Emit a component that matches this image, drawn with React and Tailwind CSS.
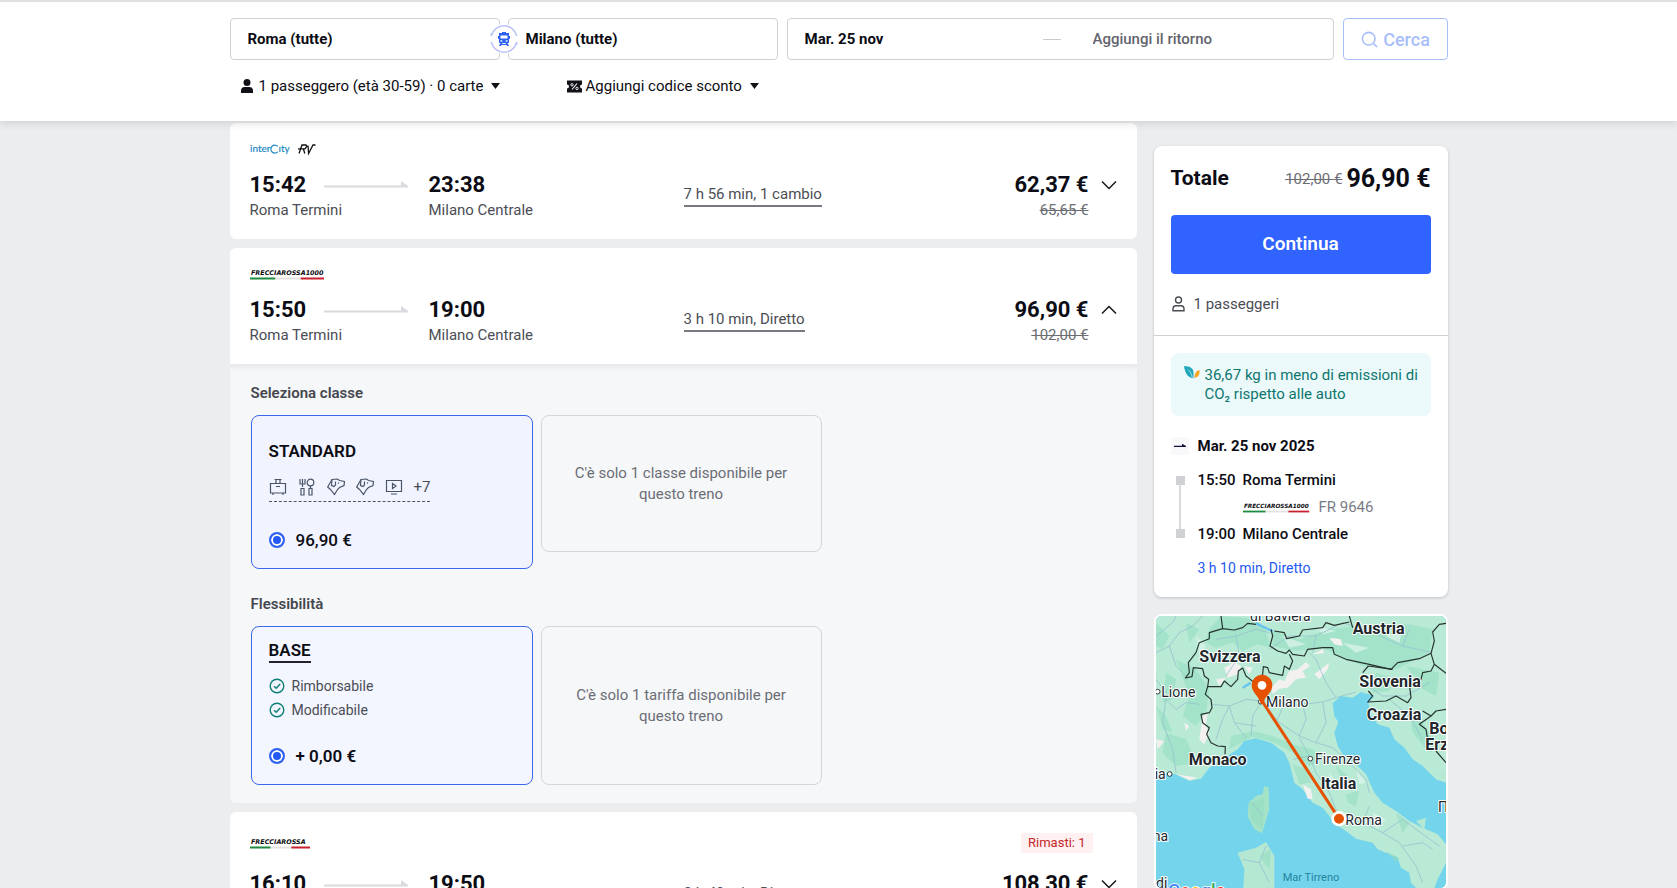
import { useState } from "react";
import { Search } from "lucide-react";

function Frecciarossa({ thousand, className }) {
  const w = thousand ? 76 : 62;
  return (
    <svg viewBox={`0 0 ${w} 12`} className={className} role="img" aria-label="Frecciarossa">
      <text
        x="1"
        y="7"
        fontSize="6.4"
        fontFamily="DejaVu Sans"
        fontWeight="700"
        fontStyle="italic"
        fill="#0c0c10"
      >
        {thousand ? "FRECCIAROSSA1000" : "FRECCIAROSSA"}
      </text>
      <rect x="0" y="9.500" width={w / 3} height="2" fill="#1c8a3f" />
      <rect x={w / 3} y="9.500" width={w / 3} height="2" fill="#e3e3e3" />
      <rect x={(w / 3) * 2} y="9.500" width={w / 3 - 2} height="2" fill="#c8202f" />
    </svg>
  );
}

function InterCity() {
  return (
    <svg viewBox="0 0 66 14" className="w-[66px] h-[14px]" role="img" aria-label="InterCity RV">
      <g fontFamily="Lato" fontSize="10" fill="#2388c4" stroke="#2388c4" strokeWidth=".2">
        <text x="0" y="10">inter</text>
        <text x="28.500" y="10">ıty</text>
      </g>
      <path d="M27.800 4.400a4 4 0 1 0 0 5.400" fill="none" stroke="#2388c4" strokeWidth="1.200" />
      <path
        d="M49 11.500L52 3h4l.8 1.500L55 6.800h-7M53.300 6.800L54.800 11.500M58 3.500L58.600 11.500 63 3h2.500"
        fill="none"
        stroke="#111"
        strokeWidth="1.300"
      />
    </svg>
  );
}

function Train({ className }) {
  return (
    <svg viewBox="0 0 12 14" className={className}>
      <path d="M4 0h4v1h3v10H1V1h3zM0 4h12v3H0zM2.500 11h2L3 14H1zM7.500 11h2L11 14H9zM2 12h8v1H2z" fill="currentColor" />
      <path d="M2.500 3.500h7v3h-7zM2.500 8.300h1.700v1.500H2.500zM7.800 8.300h1.700v1.500H7.800z" fill="#fff" />
    </svg>
  );
}

function Voucher() {
  return (
    <svg viewBox="0 0 15 13" className="w-[15px] h-[13px]">
      <path d="M0 .5h15v4a2 2 0 0 0 0 4v4H0v-4a2 2 0 0 0 0-4z" fill="#111118" />
      <path d="M5 9.500L10 3.500" stroke="#fff" strokeWidth="1.100" />
      <circle cx="5" cy="4.800" r="1.200" fill="none" stroke="#fff" strokeWidth=".9" />
      <circle cx="10" cy="8.400" r="1.200" fill="none" stroke="#fff" strokeWidth=".9" />
    </svg>
  );
}

function Leaf() {
  return (
    <svg viewBox="0 0 16 14" className="w-4 h-[14px] shrink-0">
      <path d="M0 0c6 .3 9.500 2 9.500 7v5.500C3.500 11.500 1 7 0 0z" fill="#1fa6b8" />
      <path d="M4 3.500c2.500 2 4 5 4.500 9.500" fill="none" stroke="#fff" strokeWidth=".6" />
      <path d="M15.500 4c.3 4.500-1 7-5 8 0-4 1-7 5-8z" fill="#f5a623" />
    </svg>
  );
}

const line = { fill: "none", stroke: "#4b5568", strokeWidth: 1.2 };

const Bag = () => (
  <svg viewBox="0 0 18 18" className="size-[18px]" {...line}>
    <path d="M1.500 5.500h15v9.500h-15zM4 15v2M14 15v2M7 5.500V2M11 5.500V2M5.500 1.500h7M7 8.500h4" />
  </svg>
);
const Cutlery = () => (
  <svg viewBox="0 0 18 18" className="size-[18px]" {...line}>
    <path d="M2 1v5h5V1M4.500 1v8M3 10.500h3V17H3zM11 10.500h3V17h-3zM12.500 8v2" />
    <circle cx="12.500" cy="4.500" r="3.300" />
  </svg>
);
const Dog = () => (
  <svg viewBox="0 0 18 18" className="size-[18px]" {...line}>
    <path d="M5 1.500L10.500 1 12.500 2.500 17.500 3.500 17 7.500 12.500 9.500 10.500 11.500 7.500 16.500 3.500 11.500 .7 9z" />
    <path d="M5 1.500L4.500 7.500 7 8.500 8.500 7V3.500M11.500 4.500v1.200" />
  </svg>
);
const Screen = () => (
  <svg viewBox="0 0 18 18" className="size-[18px]" {...line}>
    <path d="M1.500 2.500h15v11h-15zM7.500 5.500L11 8l-3.500 2.500zM6 16h6" />
  </svg>
);

function CheckMark() {
  return (
    <svg viewBox="0 0 16 16" className="size-4" fill="none" stroke="#0f8174" strokeWidth="1.4">
      <circle cx="8" cy="8" r="6.800" />
      <path d="M5 8.300L7.200 10.300 11.200 6" />
    </svg>
  );
}

function Arrow() {
  return (
    <svg viewBox="0 0 84 8" className="w-[84px] h-2">
      <path d="M0 4.500h77V0l7 5v1.500H0z" fill="#d9dadd" />
    </svg>
  );
}

function Radio(props) {
  return (
    <input
      type="radio"
      className="appearance-none size-4 rounded-full border-2 border-[#2f62f2] bg-white checked:bg-[#2359f0] shadow-[inset_0_0_0_2px_white]"
      {...props}
    />
  );
}

function Trip({ logo, from, to, dep, arr, duration, price, oldPrice, open, badge, onToggle }) {
  return (
    <div className="bg-white px-5 pt-[18px] pb-[18px]">
      <div className={badge ? "h-[26px] flex items-center justify-between" : "h-4 flex items-center"}>
        {logo}
        {badge && (
          <span className="mr-6 px-[7px] h-5 leading-5 bg-[#fff1f1] text-[13px] text-[#c62828]">
            {badge}
          </span>
        )}
      </div>
      <div className="mt-[13px] flex">
        <div className="w-[179px]">
          <div className="flex items-center">
            <span className="w-[74px] text-[22px] leading-[30px] font-bold">{dep}</span>
            <Arrow />
          </div>
          <div className="text-[15px] leading-[21px] text-[#4b4d55]">{from}</div>
        </div>
        <div className="w-[255px]">
          <div className="text-[22px] leading-[30px] font-bold">{arr}</div>
          <div className="text-[15px] leading-[21px] text-[#4b4d55]">{to}</div>
        </div>
        <div className="pt-3">
          <a
            href="#dettagli"
            className="inline-block border-b-2 border-[#777980] text-[15px] leading-[22px] text-[#4b4d55]"
          >
            {duration}
          </a>
        </div>
        <div className="ml-auto text-right">
          <div className="text-[22px] leading-[30px] font-bold">{price}</div>
          <div className="text-[15px] leading-[21px] text-[#6b6d75] line-through">{oldPrice}</div>
        </div>
        <button className="ml-3 h-[30px]" aria-label="Dettagli" onClick={onToggle}>
          <svg viewBox="0 0 16 10" className="w-4 h-[10px]" fill="none" stroke="#17171d" strokeWidth="1.5">
            <path d={open ? "M1 8.500L8 1.500 15 8.500" : "M1 1.500L8 8.500 15 1.500"} />
          </svg>
        </button>
      </div>
    </div>
  );
}

function Unavailable({ className, children }) {
  return (
    <div
      className={`w-[281px] rounded-lg border border-[#d5d6d9] flex items-center justify-center text-center text-[15px] leading-[21px] text-[#6b6d75] ${className}`}
    >
      <p className="w-[220px]">{children}</p>
    </div>
  );
}

function RouteMap() {
  return (
    <svg
      viewBox="0 0 870 816"
      preserveAspectRatio="xMidYMin slice"
      className="w-full h-[272px] rounded-md bg-[#72d4ec]"
      role="img"
      aria-label="Mappa Roma Milano"
    >
      <rect width="870" height="816" fill="#73d4ec" />
      {/* mainland */}
      <path
        d="M0 0H870V500L840 490 800 450 770 430 745 395 715 370 700 335 665 325 645 295 637 262 655 240 615 228 590 245 555 240 530 262 535 300 547 318 535 350 545 390 560 415 600 445 630 475 655 530 680 560 720 585 760 615 800 635 845 655 870 685V740L845 790 835 816H780L765 800 760 770 735 755 725 725 690 710 665 700 650 680 600 668 570 645 540 625 500 575 470 560 440 520 415 500 400 440 385 410 345 380 300 367 265 375 245 400 205 425 160 455 135 488 100 495 60 475 0 470z"
        fill="#b9ead6"
      />
      {/* islands */}
      <path d="M325 510L338 515 340 580 318 652 295 640 275 600 278 560 300 540 320 535z" fill="#a4e3c7" />
      <path d="M245 710L300 695 330 678 355 720 355 816H262L265 760z" fill="#b4e8d3" />
      <path d="M870 470L840 476 860 490zM780 615L810 605 805 640z" fill="#b4e8d3" />
      {/* woods */}
      <g fill="#93dcc0" opacity=".55">
        <path d="M195 0L300 10 330 45 345 95 305 85 260 105 230 80 180 95 150 80 160 40z" />
        <path d="M350 45L430 70 520 40 600 30 760 25 830 40 820 110 720 160 620 150 540 115 500 95 420 105 350 90z" />
        <path d="M60 130L120 160 160 220 150 290 120 330 80 300 100 240zM30 350L90 370 120 440 60 450 20 410z" />
        <path d="M225 360L290 345 350 360 410 385 470 400 500 430 460 450 410 410 350 378 290 362 220 400z" />
        <path d="M410 445L450 460 465 500 430 505zM540 450L575 480 560 500zM570 535L610 525 600 570 575 560zM660 170L720 190 700 225 650 230zM750 150L850 170 840 240 800 220z" />
        <path d="M760 290L800 320 850 400 820 410 770 350zM720 590L760 620 740 650zM280 560L325 545 320 640 285 610zM310 720L345 700 340 760z" />
        <path d="M0 20L40 60 20 100 0 90zM90 20L130 40 100 80zM30 170L60 190 50 250 20 260zM690 705L730 725 720 740z" />
        <path d="M600 60L680 45 750 60 780 100 700 130 640 100zM370 70L430 85 470 75 440 100 380 95zM200 45L260 30 320 60 280 80zM550 480L600 500 590 520zM0 270L30 300 50 350 20 340z" />
      </g>
      <g fill="#def5ec" opacity=".7">
        <path d="M380 60L450 85 400 95zM560 80L640 95 600 110zM690 60L740 40 730 80zM520 470L545 500 530 520zM600 460L630 500 610 505zM650 590L690 610 660 640zM480 30L540 45 500 55zM120 60L150 90 130 110z" />
      </g>
      {/* snow */}
      <g fill="#f2f1f0">
        <path d="M345 215L370 190 385 195 400 165 425 160 450 138 462 150 440 165 450 185 420 190 395 215 370 218 350 235z" />
        <path d="M475 175L500 155 520 140 515 160 490 190zM520 65L555 70 560 90 535 85zM470 115L500 100 505 112z" />
        <path d="M205 155L235 138 255 150 245 175 215 185zM265 150L290 155 280 175zM180 190L210 185 190 210z" />
        <path d="M140 300L155 290 150 330 160 350 145 385 130 370zM85 320L100 330 90 345zM0 370L25 375 5 400z" />
        <path d="M440 505L465 520 470 550 455 548zM60 475L125 485 100 492z" />
      </g>
      {/* roads */}
      <g fill="none" stroke="#98c3cf" strokeWidth="2.5">
        <path d="M0 110L40 90 70 50 110 30 140 0M40 90L60 150 90 180M0 60L50 20 60 0M30 250L60 280 90 260 130 265M30 250L20 320 50 400 60 470M0 190L30 230" />
        <path d="M170 265L220 270 270 250 318 255 380 275 440 265 500 258 540 245 600 228M220 270L235 320 270 365M318 255L290 300 285 360M318 260L370 320 430 360 480 380 530 395M440 265L450 310 430 360M380 275L360 320M235 320L300 330M500 258L510 320 480 380M220 270L200 310 180 370M540 245L510 200 480 130 460 110" />
        <path d="M430 365L460 420 480 470 520 530 548 600M460 420L410 430M530 395L580 440 630 490 640 530M548 600L620 620 680 650 730 680 780 750 800 800M620 620L640 570M680 650L740 610 780 640 850 690M740 690L800 680 830 700" />
        <path d="M340 100L400 60 480 60 560 20M480 60L470 110M560 20L650 50 740 90 830 110M740 90L760 40M620 200L680 240 750 240 820 200M700 250L760 300 800 370M180 70L240 60 300 40 340 50M240 60L250 120 210 180" />
        <path d="M290 560L320 600M260 730L310 740 340 800M310 740L330 690" />
      </g>
      <path d="M300 22L350 46M260 215L285 200" stroke="#66c4ee" strokeWidth="7" fill="none" />
      {/* borders */}
      <g fill="none" stroke="#26332f" strokeWidth="3.5" strokeLinejoin="round">
        <path d="M195 0L200 38 235 42 260 35 275 22 300 25M200 38L160 50 160 68 130 80 120 110 97 140 100 170 88 186 108 182 112 155 140 158 145 180 158 190 155 212 195 212 205 195 225 212 245 190 247 165 260 156 270 180 295 200 320 175 322 152 335 155 340 170 380 178 385 150 400 160 410 135 400 115" />
        <path d="M345 40L350 60 342 90 365 105 390 112 400 102 410 115 445 120 455 100 500 95 530 95 535 115 570 130 640 145 705 160 725 140 790 128 825 112 835 75 830 48 850 25 870 22" />
        <path d="M355 45L385 50 392 68 430 60 440 42 500 35 510 20 535 28 580 18M580 0L590 35M637 150L620 170M637 150L710 160M825 112L835 145 870 172M835 145L825 165 800 170 795 190 760 205 765 245 755 260 720 240 690 255 635 258 650 240 637 225" />
        <path d="M155 212L148 235 165 250 168 275 160 290 135 295 140 320 160 335 152 355 165 380 185 390 208 392 207 415M800 285L825 300 840 285 870 280M825 300L790 325 810 340 815 370M840 405L870 440" />
      </g>
      {/* country and city names */}
      <g
        fontFamily="Roboto, sans-serif"
        fill="#20262b"
        stroke="#fff"
        strokeWidth="6"
        strokeLinejoin="round"
        paintOrder="stroke"
      >
        <g fontSize="48" fontWeight="700">
          <text x="130" y="137">Svizzera</text>
          <text x="590" y="54">Austria</text>
          <text x="610" y="214">Slovenia</text>
          <text x="632" y="312">Croazia</text>
          <text x="820" y="353">Bosnia</text>
          <text x="808" y="403">Erzegovina</text>
          <text x="98" y="448">Monaco</text>
          <text x="494" y="520">Italia</text>
        </g>
        <g fontSize="42">
          <text x="282" y="14">di Baviera</text>
          <text x="16" y="243">Lione</text>
          <text x="330" y="272">Milano</text>
          <text x="477" y="443">Firenze</text>
          <text x="568" y="626">Roma</text>
          <text x="-4" y="488">ia</text>
          <text x="-10" y="675">na</text>
          <text x="0" y="816">di</text>
          <text x="846" y="589">П</text>
        </g>
      </g>
      <text x="380" y="796" fontFamily="Roboto, sans-serif" fontSize="33" fill="#2584a0">
        Mar Tirreno
      </text>
      <text
        x="36"
        y="844"
        fontFamily="Roboto, sans-serif"
        fontSize="54"
        fontWeight="500"
        stroke="#fff"
        strokeWidth="5"
        paintOrder="stroke"
      >
        <tspan fill="#4285f4">G</tspan>
        <tspan fill="#ea4335">o</tspan>
        <tspan fill="#fbbc05">o</tspan>
        <tspan fill="#4285f4">g</tspan>
        <tspan fill="#34a853">l</tspan>
        <tspan fill="#ea4335">e</tspan>
      </text>
      <g fill="#fff" stroke="#333b40" strokeWidth="3">
        <circle cx="5" cy="227" r="7" />
        <circle cx="41" cy="474" r="7" />
        <circle cx="463" cy="428" r="7" />
        <circle cx="314" cy="257" r="7" />
      </g>
      {/* route */}
      <path d="M318 255L549 608" stroke="#e65100" strokeWidth="9" />
      <circle cx="549" cy="608" r="19" fill="#e65100" stroke="#fff" strokeWidth="8" />
      <path
        d="M318 264c-4 0-6-4-7-9-3-15-24-25-24-48a31 31 0 0 1 62 0c0 23-21 33-24 48-1 5-3 9-7 9z"
        fill="#e65100"
      />
      <circle cx="318" cy="208" r="13" fill="#fff" />
    </svg>
  );
}

export default function App() {
  const [open, setOpen] = useState(true);

  return (
    <div className="h-screen overflow-hidden flex flex-col bg-[#ebedef] font-[Roboto,sans-serif] text-[#0c0c14]">
      {/* Search bar */}
      <header className="relative z-10 bg-white border-t-2 border-[#e0e0e0] shadow-[0_2px_8px_rgba(60,70,80,0.18)] pt-4 pb-[25px]">
        <div className="max-w-[1218px] mx-auto">
          <form className="flex gap-[9px]" onSubmit={(e) => e.preventDefault()}>
            <div className="relative w-[548px] flex gap-2">
              <input
                aria-label="Da"
                defaultValue="Roma (tutte)"
                className="min-w-0 flex-1 h-[42px] rounded border border-[#cfd1d6] pl-[17px] text-[15px] font-bold"
              />
              <input
                aria-label="A"
                defaultValue="Milano (tutte)"
                className="min-w-0 flex-1 h-[42px] rounded border border-[#cfd1d6] pl-[17px] text-[15px] font-bold"
              />
              <button
                type="button"
                aria-label="Inverti"
                className="absolute left-1/2 top-1/2 -translate-x-1/2 -translate-y-1/2 size-[30px] rounded-full bg-white flex items-center justify-center text-[#2f62f2]"
              >
                <svg viewBox="0 0 30 30" className="absolute inset-0" fill="none" stroke="#bcc3f8" strokeWidth="1.500">
                  <path d="M2.300 12a13 13 0 0 1 25.400 0M27.700 18a13 13 0 0 1-25.400 0M2.300 12V9M27.700 18v3" />
                </svg>
                <Train className="w-3 h-[14px]" />
              </button>
            </div>
            <div className="flex-1 h-[42px] rounded border border-[#cfd1d6] px-[17px] flex items-center text-[15px]">
              <input
                aria-label="Andata"
                defaultValue="Mar. 25 nov"
                className="w-[238px] min-w-0 font-bold"
              />
              <span className="w-[18px] h-px bg-[#c9cbd0]" />
              <input
                aria-label="Ritorno"
                placeholder="Aggiungi il ritorno"
                className="ml-8 min-w-0 flex-1 font-medium placeholder:text-[#62646d]"
              />
            </div>
            <button className="w-[105px] h-[42px] rounded border border-[#a9bdfa] flex items-center justify-center gap-1 text-[18px] font-medium text-[#a9bffb]">
              <Search className="size-[19px]" strokeWidth={2} />
              Cerca
            </button>
          </form>
          <div className="mt-4 pl-[11px] h-5 flex items-center text-[15px]">
            <button className="w-[326px] flex items-center">
              <svg viewBox="0 0 12 14" className="w-3 h-[14px] mr-[6px]">
                <circle cx="6" cy="3.500" r="3.500" fill="#111118" />
                <path d="M0 14v-2.500C0 9 2 8 3.500 8h5C10 8 12 9 12 11.500V14z" fill="#111118" />
              </svg>
              1 passeggero (età 30-59) · 0 carte
              <svg viewBox="0 0 9 6" className="ml-2 w-[9px] h-[6px]">
                <path d="M0 0h9L4.500 6z" fill="#111118" />
              </svg>
            </button>
            <button className="flex items-center">
              <span className="mr-1">
                <Voucher />
              </span>
              Aggiungi codice sconto
              <svg viewBox="0 0 9 6" className="ml-2 w-[9px] h-[6px]">
                <path d="M0 0h9L4.500 6z" fill="#111118" />
              </svg>
            </button>
          </div>
        </div>
      </header>

      <main className="w-full max-w-[1218px] mx-auto flex items-start gap-[17px]">
        {/* Results */}
        <section className="flex-1 pt-[2px] flex flex-col gap-[9px]">
          <div className="rounded-md overflow-hidden">
            <Trip
              logo={<InterCity />}
              dep="15:42"
              from="Roma Termini"
              arr="23:38"
              to="Milano Centrale"
              duration="7 h 56 min, 1 cambio"
              price="62,37 €"
              oldPrice="65,65 €"
            />
          </div>

          <div className="rounded-md overflow-hidden">
            <Trip
              logo={<Frecciarossa thousand className="w-[76px] h-3" />}
              dep="15:50"
              from="Roma Termini"
              arr="19:00"
              to="Milano Centrale"
              duration="3 h 10 min, Diretto"
              price="96,90 €"
              oldPrice="102,00 €"
              open={open}
              onToggle={() => setOpen(!open)}
            />
            {open && (
              <div className="bg-[#f6f7f9] px-[21px] pt-[18px] pb-[18px] shadow-[inset_0_6px_5px_-3px_rgba(60,70,80,0.1)]">
                <h3 className="text-[15px] leading-[22px] font-semibold text-[#45474f]">Seleziona classe</h3>
                <div className="mt-[11px] flex items-start gap-2">
                  <label className="w-[282px] h-[154px] rounded-lg border border-[#3a68e8] bg-[#f1f4ff] px-[17px] pt-[23px]">
                    <span className="block text-[17px] leading-6 font-semibold">STANDARD</span>
                    <span className="mt-3 pb-[2px] inline-flex items-center gap-[11px] border-b border-dashed border-[#4b5568] text-[15px] leading-6 text-[#4b4d55]">
                      <Bag />
                      <Cutlery />
                      <Dog />
                      <Dog />
                      <Screen />
                      <span>+7</span>
                    </span>
                    <span className="mt-[25px] flex items-center gap-[11px] text-[17px] leading-6 font-medium">
                      <Radio name="classe" defaultChecked />
                      96,90 €
                    </span>
                  </label>
                  <Unavailable className="h-[137px]">C'è solo 1 classe disponibile per questo treno</Unavailable>
                </div>

                <h3 className="mt-6 text-[15px] leading-[22px] font-semibold text-[#45474f]">Flessibilità</h3>
                <div className="mt-[11px] flex items-start gap-2">
                  <label className="w-[282px] h-[159px] rounded-lg border border-[#3a68e8] bg-[#f3f5ff] px-[17px] pt-3">
                    <span className="block">
                      <span className="inline-block border-b-2 border-[#22222a] text-[17px] leading-[22px] font-semibold">
                        BASE
                      </span>
                    </span>
                    <span className="mt-[11px] flex items-center gap-[7px] text-[14px] leading-6 text-[#4b4d55]">
                      <CheckMark />
                      Rimborsabile
                    </span>
                    <span className="flex items-center gap-[7px] text-[14px] leading-6 text-[#4b4d55]">
                      <CheckMark />
                      Modificabile
                    </span>
                    <span className="mt-[22px] flex items-center gap-[11px] text-[17px] leading-6 font-semibold">
                      <Radio name="tariffa" defaultChecked />
                      + 0,00 €
                    </span>
                  </label>
                  <Unavailable className="h-[159px]">C'è solo 1 tariffa disponibile per questo treno</Unavailable>
                </div>
              </div>
            )}
          </div>

          <div className="rounded-md overflow-hidden">
            <Trip
              logo={<Frecciarossa className="w-[62px] h-3" />}
              badge="Rimasti: 1"
              dep="16:10"
              from="Roma Termini"
              arr="19:50"
              to="Milano Centrale"
              duration="3 h 40 min, Diretto"
              price="108,30 €"
              oldPrice="114,00 €"
            />
          </div>
        </section>

        {/* Summary */}
        <aside className="w-[294px] shrink-0 pt-[25px] flex flex-col gap-[17px]">
          <div className="rounded-lg bg-white shadow-[0_1px_3px_rgba(60,70,80,0.25)]">
            <div className="px-[17px] pt-4 pb-5 border-b border-[#d0d1d5]">
              <div className="flex items-center h-[34px]">
                <h2 className="text-[21px] font-bold">Totale</h2>
                <span className="ml-auto text-[15px] text-[#6b6d75] line-through">102,00 €</span>
                <span className="ml-1 text-[25px] font-bold">96,90 €</span>
              </div>
              <button className="mt-[19px] w-full h-[59px] rounded bg-[#3063ff] text-white text-[19px] font-semibold">
                Continua
              </button>
              <div className="mt-[19px] flex items-center gap-2 text-[15px] leading-[22px] text-[#4b4d55]">
                <svg
                  viewBox="0 0 15 16"
                  className="w-[15px] h-4"
                  fill="none"
                  stroke="#4b4d55"
                  strokeWidth="1.4"
                >
                  <circle cx="7.500" cy="4" r="3" />
                  <path d="M2 14.800v-1.800c0-2 1-3.300 3-3.300h5c2 0 3 1.300 3 3.300v1.800z" />
                </svg>
                1 passeggeri
              </div>
            </div>
            <div className="px-[17px] pt-[17px] pb-[19px]">
              <div className="rounded-lg bg-[#ebf9fb] pl-[13px] pr-2 pt-[13px] pb-3 flex gap-[5px] text-[15px] leading-[19px] text-[#0f766e]">
                <Leaf />
                <p>
                  36,67 kg in meno di emissioni di CO₂ rispetto alle auto
                </p>
              </div>
              <div className="mt-5 flex items-center text-[15px] leading-5 font-bold">
                <span className="size-[18px] mr-[9px] bg-[#f9f9fb] flex items-center justify-center">
                  <svg viewBox="0 0 12 6" className="w-3 h-[6px]">
                    <path d="M0 2.800h8V.8l4 2.200v1H0z" fill="#12123a" />
                  </svg>
                </span>
                Mar. 25 nov 2025
              </div>
              <div className="mt-[14px] flex text-[15px] leading-5 font-medium">
                <div className="w-[27px] pl-[5px] py-[6px] flex flex-col">
                  <span className="size-[9px] bg-[#d0d1d4]" />
                  <span className="ml-[3px] w-[2px] flex-1 bg-[#d9dadd]" />
                  <span className="size-[9px] bg-[#d0d1d4]" />
                </div>
                <div className="grid grid-cols-[45px_auto] gap-y-[7px]">
                  <span>15:50</span>
                  <span>Roma Termini</span>
                  <span />
                  <span className="flex items-center gap-2 font-normal text-[#7b7d86]">
                    <Frecciarossa thousand className="w-[68px] h-[11px]" />
                    FR 9646
                  </span>
                  <span>19:00</span>
                  <span>Milano Centrale</span>
                </div>
              </div>
              <a href="#viaggio" className="mt-[14px] ml-[27px] block text-[14px] leading-5 text-[#2458f0]">
                3 h 10 min, Diretto
              </a>
            </div>
          </div>

          <div className="rounded-lg bg-white p-[2px]">
            <RouteMap />
          </div>
        </aside>
      </main>
    </div>
  );
}
